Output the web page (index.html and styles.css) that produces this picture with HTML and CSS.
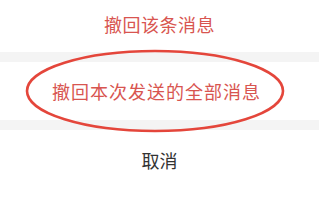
FILE: index.html
```html
<!DOCTYPE html>
<html lang="zh-CN">
<head>
    <meta charset="UTF-8">
    <meta name="viewport" content="width=device-width, initial-scale=1.0">
    <title>撤回消息</title>
    <link rel="stylesheet" href="styles.css">
</head>
<body>
    <div class="sheet">
        <div class="item item-top danger">撤回该条消息</div>
        <div class="gap"></div>
        <div class="item item-all danger">撤回本次发送的全部消息</div>
        <div class="gap"></div>
        <div class="item item-cancel">取消</div>

        <svg class="circle" xmlns="http://www.w3.org/2000/svg" viewBox="0 0 319 200">
            <ellipse cx="155" cy="91" rx="128" ry="40" fill="none" stroke="#e4463b" stroke-width="2.6"/>
        </svg>
    </div>
</body>
</html>
```

FILE: styles.css
```css
body {
    margin: 0;
    background: #ffffff;
    font-family: "Noto Sans CJK SC", "Noto Sans", sans-serif;
}
.sheet {
    position: relative;
    width: 319px;
    height: 200px;
    overflow: hidden;
    display: flex;
    flex-direction: column;
}
.item {
    display: flex;
    align-items: center;
    justify-content: center;
    background: #ffffff;
    font-size: 18px;
}
.item-top {
    height: 52px;
    padding-bottom: 5px;
    box-sizing: border-box;
    letter-spacing: 0.5px;
}
.item-all {
    height: 58px;
    letter-spacing: 1px;
    padding-right: 6px;
}
.item-cancel {
    flex: 1;
    color: #333333;
    padding-bottom: 10px;
}
.danger {
    color: #d85550;
}
.gap {
    height: 10px;
    background: #f4f4f4;
}
.circle {
    position: absolute;
    left: 0;
    top: 0;
    width: 319px;
    height: 200px;
    pointer-events: none;
}
```
